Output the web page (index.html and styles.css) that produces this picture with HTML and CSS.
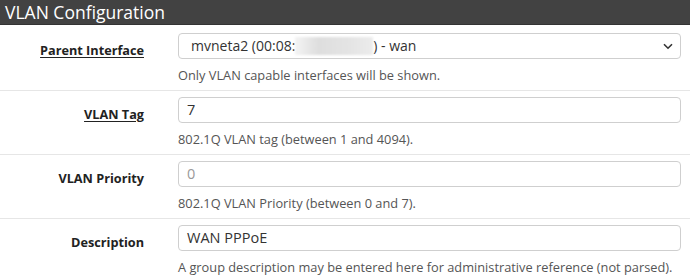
FILE: index.html
```html
<!DOCTYPE html>
<html>
<head>
<meta charset="utf-8">
<link rel="stylesheet" href="styles.css">
</head>
<body>
<div class="panel">
  <div class="panel-heading">VLAN Configuration</div>
  <div class="row first">
    <div class="label"><span class="req">Parent Interface</span></div>
    <div class="field">
      <div class="select">
        <span class="val">mvneta2 (00:08:<span class="blur"></span>) - wan</span>
        <svg class="chev" width="10" height="7" viewBox="0 0 10 7"><path d="M1 1.2 L5 5.2 L9 1.2" fill="none" stroke="#333" stroke-width="1.6"/></svg>
      </div>
      <div class="help">Only VLAN capable interfaces will be shown.</div>
    </div>
  </div>
  <div class="row">
    <div class="label"><span class="req">VLAN Tag</span></div>
    <div class="field">
      <div class="input">7</div>
      <div class="help">802.1Q VLAN tag (between 1 and 4094).</div>
    </div>
  </div>
  <div class="row">
    <div class="label"><span>VLAN Priority</span></div>
    <div class="field">
      <div class="input placeholder">0</div>
      <div class="help">802.1Q VLAN Priority (between 0 and 7).</div>
    </div>
  </div>
  <div class="row">
    <div class="label"><span>Description</span></div>
    <div class="field">
      <div class="input">WAN PPPoE</div>
      <div class="help">A group description may be entered here for administrative reference (not parsed).</div>
    </div>
  </div>
</div>
</body>
</html>
```
FILE: styles.css
```css
html, body {
  margin: 0;
  padding: 0;
  background: #fff;
}
body {
  font-family: "Open Sans", "Noto Sans", sans-serif;
  color: #333;
  width: 690px;
  height: 279px;
  overflow: hidden;
}
.panel-heading {
  background: #424242;
  border-bottom: 1px solid #333;
  color: #fff;
  font-size: 17.5px;
  height: 25px;
  line-height: 24px;
  padding-left: 5px;
  box-sizing: border-box;
}
.row {
  display: grid;
  grid-template-columns: 144px 1fr;
  column-gap: 34px;
  padding: 6px 9px 6px 0;
  border-top: 1px solid #e6e6e6;
}
.row.first {
  border-top: none;
  padding-top: 8px;
}
.label {
  text-align: right;
  font-weight: 700;
  font-size: 12.7px;
  padding-top: 8px;
  line-height: 18px;
  color: #222;
}
.label .req {
  text-decoration: underline;
  text-underline-offset: 2px;
}
.field {
  display: flex;
  flex-direction: column;
}
.select, .input {
  height: 26px;
  box-sizing: border-box;
  border: 1px solid #cfcfcf;
  border-radius: 4px;
  padding: 0 8px;
  font-size: 14.5px;
  line-height: 24px;
  color: #333;
  display: flex;
  align-items: center;
}
.select {
  justify-content: space-between;
  padding-left: 12px;
  padding-right: 7px;
  font-size: 14px;
}
.val {
  display: flex;
  align-items: center;
  white-space: pre;
}
.blur {
  display: inline-block;
  width: 78px;
  height: 18px;
  background: linear-gradient(90deg, #f4f4f4, #dedede 30%, #e4e4e4 70%, #ececec);
  filter: blur(1px);
}
.input.placeholder {
  color: #999;
}
.help {
  font-size: 12.8px;
  color: #555;
  margin-top: 7px;
  line-height: 18px;
  white-space: nowrap;
}
```
